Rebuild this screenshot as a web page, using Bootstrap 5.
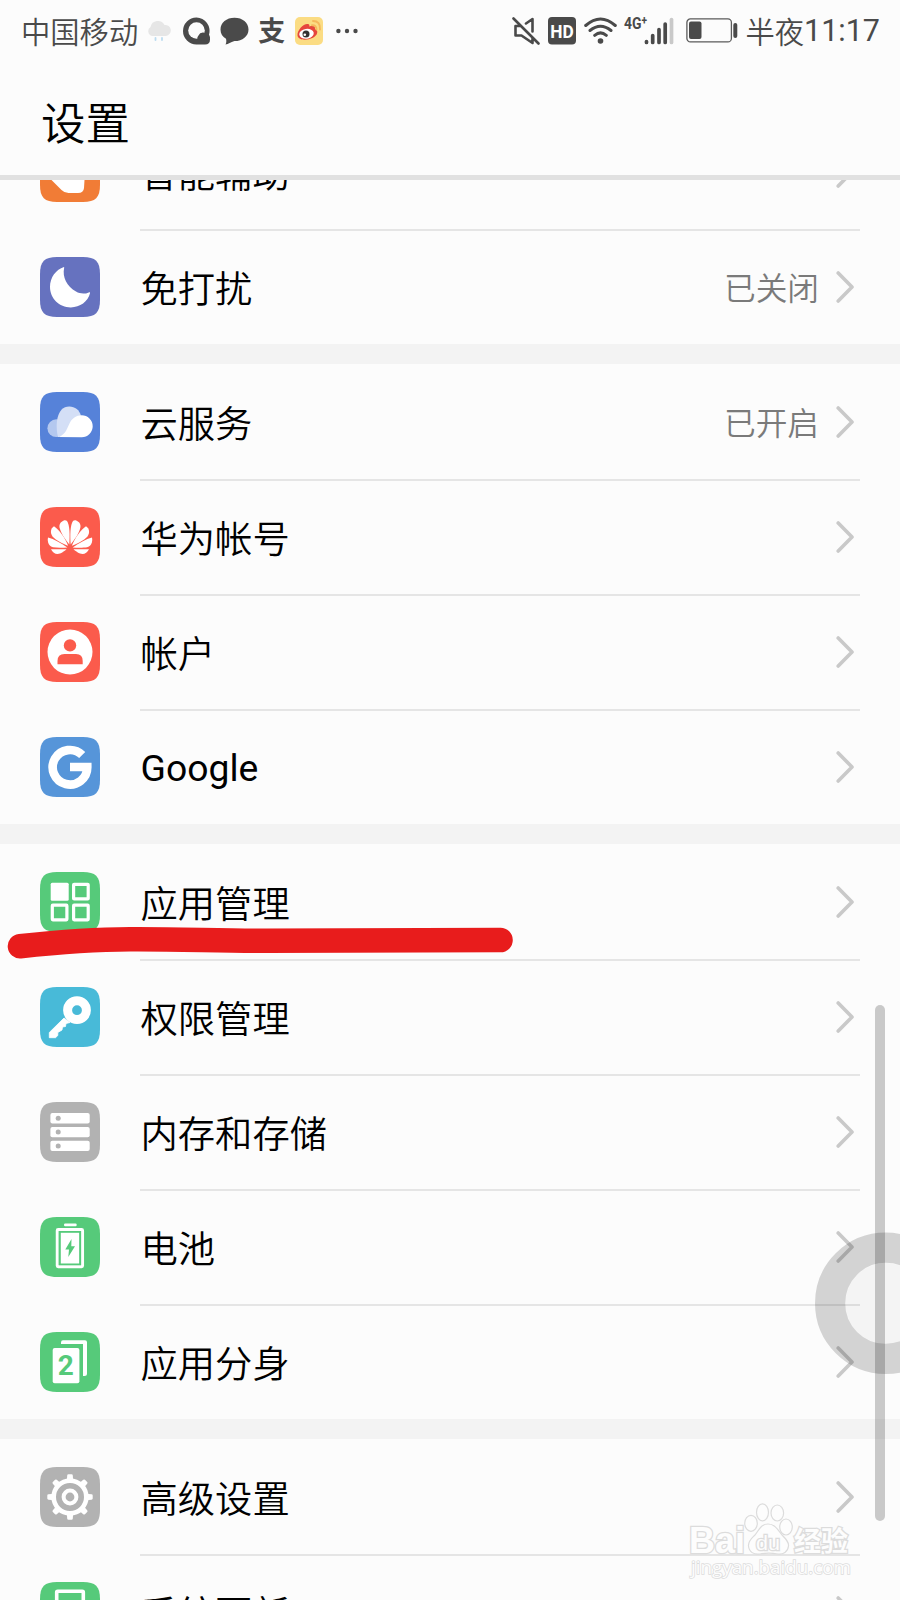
<!DOCTYPE html>
<html lang="zh-CN">
<head>
<meta charset="utf-8">
<meta name="viewport" content="width=device-width, initial-scale=1">
<title>设置</title>
<link rel="stylesheet" href="https://cdn.jsdelivr.net/npm/bootstrap@5.3.0/dist/css/bootstrap.min.css">
<style>
  body { background: #fcfcfc; color: #000; font-family: Roboto, "Noto Sans CJK SC", sans-serif; }
  .phone { width: 900px; height: 1600px; }
  .statusbar { height: 60px; padding: 1px 20px 0 21px; color: #4a4a4a; font-size: 29.3px; line-height: 56px; }
  .statusbar svg { flex: none; display: block; }
  .zh { margin-top: -1px; font-family: "Noto Sans CJK SC", sans-serif; font-weight: 350; }
  .clock { font-size: 30.5px; padding-top: 1px; }
  .page-head { height: 120px; padding-left: 41px; border-bottom: 5px solid #e1e1e1; }
  .page-head h1 { font-family: "Noto Sans CJK SC", sans-serif; font-size: 44.5px; font-weight: 350; line-height: 66px; margin: 28px 0 0; }
  .viewport-area { height: 1420px; }
  .scrolled { margin-top: -66px; }
  .group + .group { border-top: 20px solid #f3f3f3; }
  .item { height: 115px; padding: 0 40px; }
  .item .tile { width: 60px; height: 60px; flex: none; margin-right: 40px; }
  .item-body { height: 115px; padding: 0 6px 0 0.5px; border-top: 2px solid transparent; }
  .item + .item .item-body { border-top-color: #e5e5e5; }
  .item-name { font-size: 37.3px; line-height: 56px; }
  .item-name:lang(zh) { padding-top: 5px; font-weight: 350; }
  .item-note { font-size: 31.7px; line-height: 46px; color: #7a7a7a; margin-right: 17px; padding-top: 4px; font-weight: 350; }
  .chev { width: 18px; height: 32px; margin-bottom: 1.6px; fill: none; stroke: #c9c9c9; stroke-width: 3.6; stroke-linecap: round; stroke-linejoin: round; flex: none; }
  .over { position: absolute; pointer-events: none; }
  .scroll-thumb { left: 875px; top: 1005px; width: 10px; height: 516px; border-radius: 5px; background: rgba(0,0,0,.2); }
  .float-ball { left: 800px; top: 1220px; }
  .marker { left: 0; top: 900px; }
  .watermark { left: 680px; top: 1495px; }
</style>
</head>
<body>
<svg width="0" height="0" class="d-none">
  <defs>
    <path id="sq" d="M0 17C0 4.5 4.5 0 17 0H43C55.5 0 60 4.5 60 17V43C60 55.5 55.5 60 43 60H17C4.5 60 0 55.5 0 43Z"/>
    <path id="arrow" d="M2.2 2L16 16L2.2 30"/>
    <g id="petals">
      <path d="M29.3 37.5C30 28 29.8 18 27 14C26.2 13.2 25 13 23.8 13.4C20 15 18.6 18 20 22C21.5 27.5 26 33 29.3 37.5Z"/>
      <path d="M28.1 38.8C25 31 20 23.5 14 19.3C10.5 21.5 10 26 12.5 29.5C15.5 33 23 37 28.1 38.8Z"/>
      <path d="M27.3 40.5C21 36 14 32 8 30.5C7 35 9 39.3 13 40.3C17 41 23 40.8 27.3 40.5Z"/>
      <path d="M26.5 42.2H11C13 46.5 16.5 47.7 20 46.5C22.5 45.5 24.800 43.800 26.5 42.2Z"/>
    </g>
    <path id="tooth" d="M25.800 13.500L27 11.500L27.200 8.500Q27.300 7.300 28.400 7.300H31.600Q32.700 7.300 32.800 8.500L33 11.500L34.200 13.500Z"/>
  </defs>
</svg>

<main class="phone position-relative overflow-hidden">
  <header>
    <div class="statusbar d-flex align-items-center justify-content-between">
      <div class="d-flex align-items-center">
        <span class="zh">中国移动</span>
        <svg width="24" height="24" viewBox="0 0 24 24" style="margin-left:9px"><path d="M5 17A5 5 0 0 1 3.500 8A7.500 7.500 0 0 1 17.500 6A5.500 5.500 0 0 1 19 17Z" fill="#e6e6e6"/><path d="M8.500 19v2M15 19v2" stroke="#bcdcf0" stroke-width="1.800" stroke-linecap="round"/></svg>
        <svg width="27" height="28" viewBox="0 0 27 28" style="margin-left:12px"><path d="M13.500 .5A13.200 13.200 0 0 1 26 17.500Q27 19 27 22.500Q27 27.500 22 27.500H13.500A13.400 13.400 0 0 1 13.500 .5Z" fill="#4a4a4a"/><circle cx="13.500" cy="13.500" r="8.300" fill="#fcfcfc"/><path d="M14.500 22.500A4 4 0 0 1 15.500 18.500A5 5 0 0 1 24.500 18Q27 20 26 23.500L20 24Z" fill="#4a4a4a"/></svg>
        <svg width="29" height="28" viewBox="0 0 29 28" style="margin-left:10px"><path d="M14.500 .8C22.500 .8 28.500 5.700 28.500 12.400S22.500 24 14.500 24C10.500 25 8.500 27 5.500 27.500C6.500 26 6.500 24 6 21.800C2.500 19.700 .5 16.500 .5 12.400C.5 5.700 6.500 .8 14.500 .8Z" fill="#4a4a4a"/></svg>
        <span class="zh fw-bold" style="margin-left:9px;font-size:27px">支</span>
        <svg width="28" height="28" viewBox="0 0 28 28" style="margin-left:10px"><rect width="28" height="28" rx="5" fill="#fbdc83"/><path d="M2.500 18.500C2 13 9 6 13 7C15 7.300 14.300 9.500 14.300 9.500C17 8.300 20.500 8.300 20 12C24 13.500 22.500 18.500 18 20.700C11 24 3 23 2.500 18.500Z" fill="#e6463d"/><ellipse cx="11.500" cy="16.800" rx="7.300" ry="4.900" fill="#fff" transform="rotate(-8 11.500 16.800)"/><circle cx="11" cy="17" r="3.500" fill="#333"/><circle cx="9.800" cy="17.700" r="1.300" fill="#fff"/><path d="M17 8.300Q21.500 8 21.500 12.500M18 4Q25.500 4 25 12.500" fill="none" stroke="#f5b85c" stroke-width="1.900" stroke-linecap="round"/></svg>
        <svg width="22" height="6" viewBox="0 0 22 6" style="margin-left:13px" fill="#4a4a4a"><circle cx="2.400" cy="3" r="2.200"/><circle cx="11" cy="3" r="2.200"/><circle cx="19.500" cy="3" r="2.200"/></svg>
      </div>
      <div class="d-flex align-items-center">
        <svg width="28" height="28" viewBox="0 0 28 28" fill="none" stroke="#4a4a4a" stroke-width="2.600" stroke-linecap="round" stroke-linejoin="round"><path d="M1.500 1.500L26.500 26.500M8 9H3.500V18.500H9.500L20.500 26V21M14 6.500L20.500 2V14.500"/></svg>
        <svg width="28" height="28" viewBox="0 0 28 28" style="margin-left:8px"><rect width="28" height="27.500" rx="4" fill="#4a4a4a"/><text x="14" y="20.500" text-anchor="middle" textLength="23.500" lengthAdjust="spacingAndGlyphs" font-family="Roboto" font-weight="700" font-size="18.500" fill="#fff">HD</text></svg>
        <svg width="33" height="28" viewBox="0 0 33 28" style="margin-left:8px" fill="none" stroke="#4a4a4a" stroke-width="3" stroke-linecap="round"><path d="M1.700 8.500Q16.500 -4.500 31.300 8.500M6 13.500Q16.500 5 27 13.500M10.700 18.300Q16.500 13.500 22.300 18.300"/><circle cx="16.500" cy="24" r="2.800" fill="#4a4a4a" stroke="none"/></svg>
        <svg width="50" height="30" viewBox="0 0 50 30" style="margin-left:7px" overflow="visible"><text x="0" y="13" textLength="23" lengthAdjust="spacingAndGlyphs" font-family="Roboto" font-weight="700" font-size="16.500" fill="#4a4a4a">4G<tspan font-size="12" dy="-4">+</tspan></text><g stroke-width="3.700" stroke-linecap="round" stroke="#4a4a4a"><path d="M22.500 25.500v1M28.700 19.500v7M35 13.500v13M41.200 8v18.500"/><path d="M47.500 3.500v23" stroke="#c9c9c9"/></g></svg>
        <svg width="52" height="25" viewBox="0 0 52 25" style="margin-left:12px"><rect x=".9" y=".9" width="44.500" height="23" rx="3.500" fill="none" stroke="#5a5a5a" stroke-width="1.300"/><rect x="3" y="3.500" width="12.500" height="17.500" rx="2" fill="#4a4a4a"/><rect x="47.300" y="5" width="4" height="15" rx="2" fill="#4a4a4a"/></svg>
        <span class="zh" style="margin-left:7px">半夜</span><span class="clock">11:17</span>
      </div>
    </div>
    <div class="page-head"><h1 class="d-inline-block">设置</h1></div>
  </header>

  <div class="viewport-area overflow-hidden">
    <div class="scrolled">
      <section class="group">
        <div class="item d-flex align-items-center">
          <svg class="tile" viewBox="0 0 60 60"><use href="#sq" fill="#f17c36"/><path d="M9 35.500L21.500 48Q24.500 51 28.500 51H38Q43.500 51 44 46L45 30H9Z" fill="#fff"/></svg>
          <div class="item-body d-flex align-items-center flex-grow-1"><span class="item-name">智能辅助</span><svg class="chev ms-auto" viewBox="0 0 18 32"><use href="#arrow"/></svg></div>
        </div>
        <div class="item d-flex align-items-center">
          <svg class="tile" viewBox="0 0 60 60"><use href="#sq" fill="#6672bf"/><path d="M24 10C16 12.500 10 20.500 10 29.800C10 41.500 19.300 50.400 30.800 50.400C40 50.400 48 44.500 50 36.300C50.300 35.200 49.500 35 48.700 35.400C45 37.200 40 37 36 34.600C27 29.500 22 20.500 24.200 10.600Z" fill="#fff"/></svg>
          <div class="item-body d-flex align-items-center flex-grow-1"><span class="item-name">免打扰</span><span class="item-note ms-auto">已关闭</span><svg class="chev" viewBox="0 0 18 32"><use href="#arrow"/></svg></div>
        </div>
      </section>

      <section class="group">
        <div class="item d-flex align-items-center">
          <svg class="tile" viewBox="0 0 60 60"><use href="#sq" fill="#5682d9"/><circle cx="16.300" cy="36.200" r="8.900" fill="#b4c8ef"/><path d="M18 45C15 33 16.500 14.500 29.300 14.500C35 14.500 39.500 18 41 24L28 42Z" fill="#d4dff6"/><path d="M17 45C25 44 26.500 37.500 29.500 31.500C31.700 26.500 36.500 23.300 41.700 23.300A11 11 0 0 1 41.700 45.300Z" fill="#fff"/></svg>
          <div class="item-body d-flex align-items-center flex-grow-1"><span class="item-name">云服务</span><span class="item-note ms-auto">已开启</span><svg class="chev" viewBox="0 0 18 32"><use href="#arrow"/></svg></div>
        </div>
        <div class="item d-flex align-items-center">
          <svg class="tile" viewBox="0 0 60 60"><use href="#sq" fill="#fb5b4c"/><g fill="#fff"><use href="#petals"/><use href="#petals" transform="translate(60 0) scale(-1 1)"/></g></svg>
          <div class="item-body d-flex align-items-center flex-grow-1"><span class="item-name">华为帐号</span><svg class="chev ms-auto" viewBox="0 0 18 32"><use href="#arrow"/></svg></div>
        </div>
        <div class="item d-flex align-items-center">
          <svg class="tile" viewBox="0 0 60 60"><use href="#sq" fill="#fb5b4c"/><circle cx="30" cy="30" r="22.500" fill="#fff"/><g fill="#fb5b4c"><circle cx="30" cy="23.400" r="6.200"/><path d="M17.500 42.300V39Q17.500 32 24.500 32H36Q42.700 32 42.700 39V42.300Z"/></g></svg>
          <div class="item-body d-flex align-items-center flex-grow-1"><span class="item-name">帐户</span><svg class="chev ms-auto" viewBox="0 0 18 32"><use href="#arrow"/></svg></div>
        </div>
        <div class="item d-flex align-items-center">
          <svg class="tile" viewBox="0 0 60 60"><use href="#sq" fill="#5695d9"/><path d="M42.200 18A17.300 17.300 0 1 0 47.300 30H30" fill="none" stroke="#fff" stroke-width="8.600"/></svg>
          <div class="item-body d-flex align-items-center flex-grow-1"><span class="item-name" lang="en">Google</span><svg class="chev ms-auto" viewBox="0 0 18 32"><use href="#arrow"/></svg></div>
        </div>
      </section>

      <section class="group">
        <div class="item d-flex align-items-center">
          <svg class="tile" viewBox="0 0 60 60"><use href="#sq" fill="#56ca7a"/><rect x="10.700" y="10.700" width="18" height="18" rx="1.500" fill="#fff"/><g fill="none" stroke="#fff" stroke-width="3.200"><rect x="33.600" y="12.300" width="14.600" height="14.600" rx=".5"/><rect x="12.300" y="33.200" width="14.600" height="14.600" rx=".5"/><rect x="33.600" y="33.200" width="14.600" height="14.600" rx=".5"/></g></svg>
          <div class="item-body d-flex align-items-center flex-grow-1"><span class="item-name">应用管理</span><svg class="chev ms-auto" viewBox="0 0 18 32"><use href="#arrow"/></svg></div>
        </div>
        <div class="item d-flex align-items-center">
          <svg class="tile" viewBox="0 0 60 60"><use href="#sq" fill="#48bad8"/><circle cx="37" cy="23.200" r="9.400" fill="none" stroke="#fff" stroke-width="9"/><path d="M24 31L9.300 45.500V50.700H15.500L17.800 48.500V45.500L22 43L22.500 40L25.500 39.500L26 36.500L30 35.500Z" fill="#fff" stroke="#fff" stroke-width=".8" stroke-linejoin="round"/></svg>
          <div class="item-body d-flex align-items-center flex-grow-1"><span class="item-name">权限管理</span><svg class="chev ms-auto" viewBox="0 0 18 32"><use href="#arrow"/></svg></div>
        </div>
        <div class="item d-flex align-items-center">
          <svg class="tile" viewBox="0 0 60 60"><use href="#sq" fill="#b2b2b2"/><g fill="#fff"><rect x="10.400" y="11" width="39.300" height="10.400" rx="2"/><rect x="10.400" y="24.900" width="39.300" height="10.400" rx="2"/><rect x="10.400" y="38.700" width="39.300" height="10.400" rx="2"/></g><g fill="#b2b2b2"><circle cx="18.200" cy="16.200" r="2.500"/><circle cx="18.200" cy="30.100" r="2.500"/><circle cx="18.200" cy="43.900" r="2.500"/></g></svg>
          <div class="item-body d-flex align-items-center flex-grow-1"><span class="item-name">内存和存储</span><svg class="chev ms-auto" viewBox="0 0 18 32"><use href="#arrow"/></svg></div>
        </div>
        <div class="item d-flex align-items-center">
          <svg class="tile" viewBox="0 0 60 60"><use href="#sq" fill="#56ca7a"/><rect x="24" y="6.500" width="12.700" height="2.800" rx="1.200" fill="#fff"/><rect x="17.200" y="12.500" width="25.400" height="37.300" rx="1" fill="none" stroke="#fff" stroke-width="2.900"/><rect x="20.700" y="15.500" width="18.600" height="31.200" fill="#fff"/><path d="M31.500 22L25.300 32.500H29L28.300 40L35 29.300H31.300Z" fill="#56ca7a"/><rect x="19.600" y="14.900" width="20.600" height="32.500" fill="none" stroke="#56ca7a" stroke-width="1.400"/></svg>
          <div class="item-body d-flex align-items-center flex-grow-1"><span class="item-name">电池</span><svg class="chev ms-auto" viewBox="0 0 18 32"><use href="#arrow"/></svg></div>
        </div>
        <div class="item d-flex align-items-center">
          <svg class="tile" viewBox="0 0 60 60"><use href="#sq" fill="#56ca7a"/><path d="M21 12V10.500Q21 8.300 23 8.300H45Q47 8.300 47 10.300V41.500Q47 44 44.500 44H43V12Z" fill="#fff"/><rect x="12.700" y="16" width="26.700" height="35.300" rx="2" fill="#fff"/><text x="25.700" y="43.300" text-anchor="middle" font-family="Roboto" font-weight="700" font-size="28" fill="#56ca7a">2</text></svg>
          <div class="item-body d-flex align-items-center flex-grow-1"><span class="item-name">应用分身</span><svg class="chev ms-auto" viewBox="0 0 18 32"><use href="#arrow"/></svg></div>
        </div>
      </section>

      <section class="group">
        <div class="item d-flex align-items-center">
          <svg class="tile" viewBox="0 0 60 60"><use href="#sq" fill="#b2b2b2"/><g fill="#fff"><use href="#tooth"/><use href="#tooth" transform="rotate(45 30 30)"/><use href="#tooth" transform="rotate(90 30 30)"/><use href="#tooth" transform="rotate(135 30 30)"/><use href="#tooth" transform="rotate(180 30 30)"/><use href="#tooth" transform="rotate(225 30 30)"/><use href="#tooth" transform="rotate(270 30 30)"/><use href="#tooth" transform="rotate(315 30 30)"/></g><g fill="none" stroke="#fff"><circle cx="30" cy="30" r="16.300" stroke-width="4.600"/><circle cx="30" cy="30" r="6.400" stroke-width="4"/></g></svg>
          <div class="item-body d-flex align-items-center flex-grow-1"><span class="item-name">高级设置</span><svg class="chev ms-auto" viewBox="0 0 18 32"><use href="#arrow"/></svg></div>
        </div>
        <div class="item d-flex align-items-center">
          <svg class="tile" viewBox="0 0 60 60"><use href="#sq" fill="#56ca7a"/><rect x="16.700" y="9.200" width="26.600" height="42" rx="1" fill="none" stroke="#fff" stroke-width="3.600"/></svg>
          <div class="item-body d-flex align-items-center flex-grow-1"><span class="item-name">系统更新</span><svg class="chev ms-auto" viewBox="0 0 18 32"><use href="#arrow"/></svg></div>
        </div>
      </section>
    </div>
  </div>

  <!-- layers floating above the list -->
  <div class="over scroll-thumb"></div>
  <svg class="over float-ball" width="100" height="160" viewBox="0 0 100 160"><circle cx="85.700" cy="83.300" r="55.600" fill="none" stroke="#000" stroke-opacity=".16" stroke-width="30.200"/><circle cx="85.700" cy="83.300" r="40.500" fill="#000" fill-opacity=".03"/></svg>
  <svg class="over marker" width="530" height="70" viewBox="0 0 530 70"><path d="M20 46.200C60 42 90 39.500 130 39.300C180 39 220 41 267 40.800C320 40.500 380 40 500.500 40" fill="none" stroke="#e81c1c" stroke-width="24.600" stroke-linecap="round"/></svg>
  <svg class="over watermark" width="190" height="90" viewBox="0 0 190 90" fill="#fdfdfd" stroke="#dcdcdc" stroke-width="1.200">
    <g paint-order="stroke" stroke-width="2.600" font-weight="700">
      <text x="9" y="58" textLength="56" lengthAdjust="spacingAndGlyphs" font-family="Liberation Sans" font-size="36">Bai</text>
      <text x="114" y="56" textLength="54" font-family="Noto Sans CJK SC" font-size="27">经验</text>
    </g>
    <ellipse cx="71" cy="28.300" rx="6.300" ry="8"/><ellipse cx="82.500" cy="17.300" rx="6" ry="8.500"/><ellipse cx="97.300" cy="18" rx="6.300" ry="8"/><ellipse cx="106" cy="32" rx="6.300" ry="8"/>
    <path d="M88 29C95 29 98 35 102 40C106 44 109 47 108.500 51C108 57 103 59.500 98 59C92 58 85 58 80 59C74 60 69 57 68.500 51C68 46 72 43 75 40C79 35 81 29 88 29Z"/>
    <text x="76" y="54.500" textLength="24" lengthAdjust="spacingAndGlyphs" font-family="Liberation Sans" font-size="21" paint-order="stroke" stroke-width="2.600">du</text>
    <text x="11" y="79" textLength="160" lengthAdjust="spacingAndGlyphs" font-family="Open Sans" font-size="19" paint-order="stroke" stroke-width="1.600">jingyan.baidu.com</text>
  </svg>
</main>
<script src="https://cdn.jsdelivr.net/npm/bootstrap@5.3.0/dist/js/bootstrap.bundle.min.js"></script>
</body>
</html>
